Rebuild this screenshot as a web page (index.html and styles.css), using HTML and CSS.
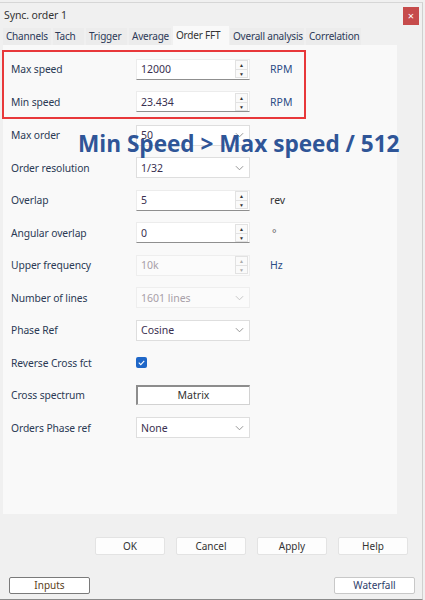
FILE: index.html
```html
<!DOCTYPE html>
<html>
<head>
<meta charset="utf-8">
<link rel="stylesheet" href="styles.css">
</head>
<body>
<div class="window">
  <div class="titlebar">
    <span class="title">Sync. order 1</span>
    <span class="close">×</span>
  </div>
  <div class="tabs">
    <span class="tab t1">Channels</span>
    <span class="tab t2">Tach</span>
    <span class="tab t3">Trigger</span>
    <span class="tab t4">Average</span>
    <span class="tab t5 active">Order FFT</span>
    <span class="tab t6">Overall analysis</span>
    <span class="tab t7">Correlation</span>
  </div>
  <div class="body">
    <div class="panel">
      <div class="highlight">
        <div class="row">
          <span class="label">Max speed</span>
          <div class="field"><span class="val">12000</span><span class="spin"><i>▲</i><i>▼</i></span></div>
          <span class="unit blue">RPM</span>
        </div>
        <div class="row">
          <span class="label">Min speed</span>
          <div class="field"><span class="val">23.434</span><span class="spin"><i>▲</i><i>▼</i></span></div>
          <span class="unit blue">RPM</span>
        </div>
      </div>
      <div class="rows">
        <div class="row">
          <span class="label">Max order</span>
          <div class="combo"><span class="val">50</span><svg class="chev" viewBox="0 0 10 6"><path d="M1 1 L5 5 L9 1" fill="none" stroke="#8a8a8a" stroke-width="1"/></svg></div>
        </div>
        <div class="row">
          <span class="label">Order resolution</span>
          <div class="combo"><span class="val">1/32</span><svg class="chev" viewBox="0 0 10 6"><path d="M1 1 L5 5 L9 1" fill="none" stroke="#8a8a8a" stroke-width="1"/></svg></div>
        </div>
        <div class="row">
          <span class="label">Overlap</span>
          <div class="field"><span class="val">5</span><span class="spin"><i>▲</i><i>▼</i></span></div>
          <span class="unit">rev</span>
        </div>
        <div class="row">
          <span class="label">Angular overlap</span>
          <div class="field"><span class="val">0</span><span class="spin"><i>▲</i><i>▼</i></span></div>
          <span class="unit deg">°</span>
        </div>
        <div class="row">
          <span class="label">Upper frequency</span>
          <div class="field disabled"><span class="val">10k</span><span class="spin"><i>▲</i><i>▼</i></span></div>
          <span class="unit blue">Hz</span>
        </div>
        <div class="row">
          <span class="label">Number of lines</span>
          <div class="combo disabled"><span class="val">1601 lines</span><svg class="chev" viewBox="0 0 10 6"><path d="M1 1 L5 5 L9 1" fill="none" stroke="#c0c0c0" stroke-width="1"/></svg></div>
        </div>
        <div class="row">
          <span class="label">Phase Ref</span>
          <div class="combo"><span class="val">Cosine</span><svg class="chev" viewBox="0 0 10 6"><path d="M1 1 L5 5 L9 1" fill="none" stroke="#8a8a8a" stroke-width="1"/></svg></div>
        </div>
        <div class="row">
          <span class="label">Reverse Cross fct</span>
          <span class="check"><svg viewBox="0 0 12 12"><path d="M3 6.2 L5.2 8.3 L9 4.2" fill="none" stroke="#fff" stroke-width="1.2"/></svg></span>
        </div>
        <div class="row">
          <span class="label">Cross spectrum</span>
          <div class="matrix">Matrix</div>
        </div>
        <div class="row">
          <span class="label">Orders Phase ref</span>
          <div class="combo"><span class="val">None</span><svg class="chev" viewBox="0 0 10 6"><path d="M1 1 L5 5 L9 1" fill="none" stroke="#8a8a8a" stroke-width="1"/></svg></div>
        </div>
      </div>
      <div class="note">Min Speed &gt; Max speed / 512</div>
    </div>
  </div>
  <div class="actions">
    <span class="btn">OK</span>
    <span class="btn">Cancel</span>
    <span class="btn">Apply</span>
    <span class="btn">Help</span>
  </div>
  <div class="footer">
    <span class="btn2 inputs">Inputs</span>
    <span class="btn2 waterfall">Waterfall</span>
  </div>
</div>
</body>
</html>
```

FILE: styles.css
```css
* { box-sizing: border-box; }
html, body { margin: 0; padding: 0; }
body {
  width: 425px;
  height: 600px;
  background: #f0f0f0;
  font-family: "Noto Sans", "Open Sans", sans-serif;
  font-size: 10px;
  color: #333;
  overflow: hidden;
}
.window {
  width: 423px;
  height: 598px;
  margin-top: 2px;
  border-top: 1px solid #d6d6d6;
  border-right: 1px solid #d0d0d0;
  border-bottom: 1px solid #8a8a8a;
  position: relative;
}
.titlebar {
  height: 23px;
  display: flex;
  align-items: center;
  justify-content: space-between;
  padding-left: 4px;
  padding-right: 3px;
}
.title { font-size: 10.5px; color: #333; letter-spacing: -0.1px; }
.close {
  width: 16px;
  height: 18px;
  background: #c64b4b;
  color: #fff;
  font-size: 11px;
  display: flex;
  align-items: center;
  justify-content: center;
  margin-top: 2px;
}
.tabs {
  display: flex;
  height: 17px;
  margin-top: 2px;
  padding-left: 3px;
  align-items: stretch;
}
.tab {
  padding: 1px 0 0 3px;
  margin-right: 2px;
  font-size: 10px;
  letter-spacing: -0.2px;
  color: #2d3a58;
  background: #ececec;
  white-space: nowrap;
  overflow: hidden;
}
.t1 { width: 48px; }
.t2 { width: 31px; padding-left: 2px; }
.t3 { width: 41px; }
.t4 { width: 42px; }
.t5 { width: 56px; margin-right: 1px; }
.t6 { width: 74px; }
.t7 { width: 55px; }
.tab.active {
  background: #f9f9f9;
  color: #333;
  margin-top: -2px;
  padding-top: 2px;
}
.body {
  display: flex;
  padding-left: 3px;
}
.panel {
  width: 394px;
  height: 469px;
  background: #f9f9f9;
  position: relative;
  padding-top: 5px;
}
.highlight {
  border: 2px solid #e8383a;
  width: 304px;
  margin-left: -1px;
  height: 69px;
  padding-top: 1px;
  margin-bottom: 0;
}
.row {
  display: grid;
  grid-template-columns: 125px 114px auto;
  align-items: center;
  height: 32.5px;
  padding-left: 8px;
}
.highlight .row { padding-left: 7px; }
.label { color: #2b3a55; font-size: 10.3px; letter-spacing: -0.1px; white-space: nowrap; }
.field, .combo {
  height: 21px;
  background: #fff;
  border: 1px solid #ececec;
  border-bottom: 1px solid #8f8f8f;
  display: flex;
  align-items: center;
  justify-content: space-between;
  padding-left: 4px;
}
.combo { border-bottom-color: #d4d4d4; border-color: #dedede; }
.val { color: #3a3050; font-size: 10.5px; }
.spin {
  width: 13px;
  height: 18px;
  display: flex;
  flex-direction: column;
  border: 1px solid #e2e2e2;
  margin-right: 1px;
  background: #fafafa;
}
.spin i {
  flex: 1;
  font-style: normal;
  font-size: 5px;
  line-height: 8px;
  text-align: center;
  color: #333;
}
.spin i + i { border-top: 1px solid #e2e2e2; }
.disabled { background: #fbfbfb; border-color: #eeeeee; border-bottom-color: #eeeeee; }
.disabled .val { color: #a8a0a8; }
.disabled .spin i { color: #aaa; }
.chev { width: 9px; height: 6px; margin-right: 5px; }
.unit { font-size: 10.5px; color: #333; margin-left: 20px; }
.unit.blue { color: #2d4d86; }
.unit.deg { margin-left: 22px; color: #666; }
.check {
  width: 11px;
  height: 11px;
  background: #1f67c8;
  border-radius: 2px;
  display: flex;
}
.check svg { width: 11px; height: 11px; }
.matrix {
  height: 20px;
  border: 1px solid #d2d2d2;
  border-top: 2px solid #8d8d8d;
  border-left: 2px solid #8d8d8d;
  background: #fff;
  text-align: center;
  line-height: 17px;
  font-size: 10.5px;
  color: #333;
}
.note {
  position: absolute;
  left: 75px;
  top: 83px;
  font-family: "Open Sans", "Noto Sans", sans-serif;
  font-weight: 700;
  font-size: 22.6px;
  color: #2f5597;
  letter-spacing: 0;
  white-space: nowrap;
}
.actions {
  display: flex;
  justify-content: flex-end;
  gap: 11px;
  padding-right: 14px;
  margin-top: 23px;
}
.btn {
  width: 70px;
  height: 18px;
  background: #fdfdfd;
  border: 1px solid #e3e3e3;
  border-radius: 2px;
  text-align: center;
  line-height: 16px;
  font-size: 10px;
  color: #333;
}
.footer {
  display: flex;
  justify-content: space-between;
  padding-left: 9px;
  padding-right: 7px;
  margin-top: 22px;
}
.btn2 {
  width: 81px;
  height: 17px;
  background: #fff;
  border: 1px solid #c8c8c8;
  border-radius: 2px;
  text-align: center;
  line-height: 15px;
  font-size: 10px;
}
.inputs { border-color: #7a7a7a; color: #5a4020; }
.waterfall { color: #2e3d6a; }
```
